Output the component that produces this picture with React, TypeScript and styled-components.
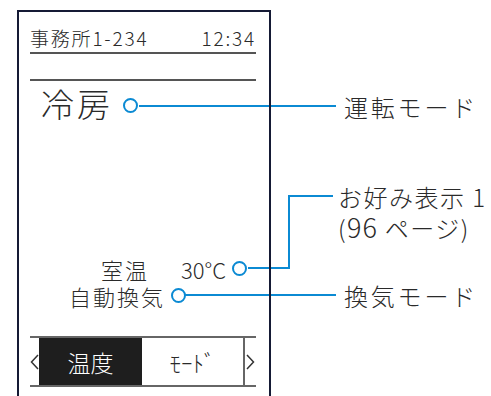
import React from 'react';
import styled, { createGlobalStyle } from 'styled-components';

const Global = createGlobalStyle`
  html, body {
    margin: 0;
    padding: 0;
    background: #fff;
    overflow: hidden;
  }
  body {
    font-family: "Noto Sans CJK JP", "Noto Sans", sans-serif;
    font-weight: 300;
    color: #2a2a2a;
  }
`;

const BLUE = '#0b8ad3';

const Figure = styled.div`
  position: relative;
  width: 491px;
  height: 396px;
  display: flex;
  align-items: flex-start;
  overflow: hidden;
`;

/* 引き出し線 (パネルの下に描く) */
const Leaders = styled.svg`
  position: absolute;
  left: 0;
  top: 0;
  pointer-events: none;
`;

const Panel = styled.div`
  position: relative;
  flex-shrink: 0;
  margin: 10px 0 0 17px;
  width: 254px;
  height: 400px;
  box-sizing: border-box;
  border: 2px solid #151a35;
  border-bottom: none;
  padding: 0 13px 0 11px;
  display: flex;
  flex-direction: column;
`;

const Header = styled.div`
  display: flex;
  justify-content: space-between;
  padding: 15px 0 3px;
  border-bottom: 2px solid #555;
  font-size: 19px;
  line-height: 22px;
  letter-spacing: 1.8px;
`;

const Rule = styled.div`
  height: 2px;
  margin-top: 25px;
  background: #555;
`;

const ModeRow = styled.div`
  display: flex;
  height: 40px;
  margin-top: 2px;
  padding-left: 11px;
`;

const ModeText = styled.span`
  font-size: 33px;
  line-height: 40px;
  letter-spacing: 3px;
`;

const Marker = styled.span<{ $ml: number; $mt: number }>`
  flex-shrink: 0;
  width: 15px;
  height: 15px;
  box-sizing: border-box;
  border: 2px solid ${BLUE};
  border-radius: 50%;
  background: #fff;
  margin-left: ${(p) => p.$ml}px;
  margin-top: ${(p) => p.$mt}px;
`;

const StatusBlock = styled.div`
  margin-top: 133px;
  display: flex;
  flex-direction: column;
`;

const StatusRow = styled.div<{ $indent: number }>`
  display: flex;
  height: 27px;
  padding-left: ${(p) => p.$indent}px;
  font-size: 22px;
  line-height: 26px;
`;

const StatusLabel = styled.span`
  letter-spacing: 2px;
`;

const StatusValue = styled.span`
  margin-left: 32px;
`;

const TabBar = styled.div`
  display: flex;
  height: 51px;
  margin-top: 26px;
  box-sizing: border-box;
  border-top: 2px solid #666;
  border-bottom: 2px solid #666;
`;

const Arrow = styled.div<{ $w: number }>`
  width: ${(p) => p.$w}px;
  display: flex;
  align-items: center;
  justify-content: center;
`;

const Tab = styled.div<{ $active?: boolean; $w: number }>`
  width: ${(p) => p.$w}px;
  display: flex;
  align-items: center;
  justify-content: center;
  font-size: 23px;
  background: ${(p) => (p.$active ? '#1e1e1e' : '#fff')};
  color: ${(p) => (p.$active ? '#fff' : '#2a2a2a')};
  border-right: ${(p) => (p.$active ? 'none' : '2px solid #666')};
`;

const Labels = styled.div`
  margin-left: 67px;
  padding-top: 92px;
  display: flex;
  flex-direction: column;
  font-size: 24px;
  line-height: 30px;
  white-space: nowrap;
`;

const Label = styled.div<{ $mt: number; $indent?: number; $ls: number }>`
  margin-top: ${(p) => p.$mt}px;
  padding-left: ${(p) => p.$indent ?? 0}px;
  letter-spacing: ${(p) => p.$ls}px;
`;

const PageNo = styled.span`
  font-size: 27px;
  letter-spacing: 1px;
`;

const Chevron = ({ dir }: { dir: 'left' | 'right' }) => (
  <svg width="9" height="16" viewBox="0 0 9 16">
    <path
      d={dir === 'left' ? 'M8 1 L1.5 8 L8 15' : 'M1 1 L7.5 8 L1 15'}
      fill="none"
      stroke="#333"
      strokeWidth="1.5"
    />
  </svg>
);

const App = () => {
  return (
    <>
      <Global />
      <Figure>
        <Leaders width="491" height="396">
          <g fill="none" stroke={BLUE} strokeWidth="2">
            <path d="M139 106 H336" />
            <path d="M248 268 H289 V196 H333" />
            <path d="M180 295 H336" />
          </g>
        </Leaders>
        <Panel>
          <Header>
            <span>事務所1-234</span>
            <span>12:34</span>
          </Header>
          <Rule />
          <ModeRow>
            <ModeText>冷房</ModeText>
            <Marker $ml={10} $mt={15} />
          </ModeRow>
          <StatusBlock>
            <StatusRow $indent={71}>
              <StatusLabel>室温</StatusLabel>
              <StatusValue>30°C</StatusValue>
              <Marker $ml={6} $mt={5} />
            </StatusRow>
            <StatusRow $indent={39}>
              <StatusLabel>自動換気</StatusLabel>
              <Marker $ml={6} $mt={5} />
            </StatusRow>
          </StatusBlock>
          <TabBar>
            <Arrow $w={9}>
              <Chevron dir="left" />
            </Arrow>
            <Tab $active $w={104}>温度</Tab>
            <Tab $w={102}>ﾓｰﾄﾞ</Tab>
            <Arrow $w={11}>
              <Chevron dir="right" />
            </Arrow>
          </TabBar>
        </Panel>
        <Labels>
          <Label $mt={0} $indent={6} $ls={2.8}>運転モード</Label>
          <Label $mt={60} $ls={1.5}>
            お好み表示 1
            <br />
            (<PageNo>96</PageNo> ページ)
          </Label>
          <Label $mt={38} $indent={6} $ls={2.8}>換気モード</Label>
        </Labels>
      </Figure>
    </>
  );
};

export default App;
